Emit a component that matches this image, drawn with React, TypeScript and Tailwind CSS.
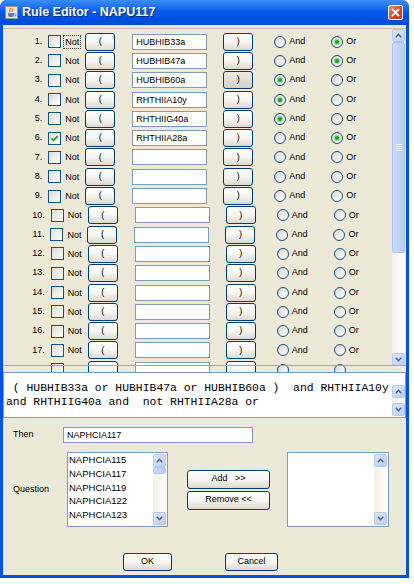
import clsx from "clsx"

type RowData = { value: string; op: "and" | "or" | null; not?: boolean }

const rows: RowData[] = [
  { value: "HUBHIB33a", op: "or" },
  { value: "HUBHIB47a", op: "or" },
  { value: "HUBHIB60a", op: "and" },
  { value: "RHTHIIA10y", op: "and" },
  { value: "RHTHIIG40a", op: "and" },
  { value: "RHTHIIA28a", op: "or", not: true },
  ...Array.from({ length: 12 }, () => ({ value: "", op: null } as RowData)),
]

const questions = ["NAPHCIA115", "NAPHCIA117", "NAPHCIA119", "NAPHCIA122", "NAPHCIA123", "NAPHCIA146"]

function Check({ checked }: { checked?: boolean }) {
  return (
    <div className="w-[13px] h-[13px] shrink-0 border border-[#1c5180] bg-linear-to-br from-[#dcdcd7] to-white flex items-center justify-center">
      {checked && (
        <svg width="9" height="9" viewBox="0 0 9 9">
          <path d="M1.5 4.3 L3.6 6.4 L7.6 2.2" fill="none" stroke="#21a121" strokeWidth="1.7" />
        </svg>
      )}
    </div>
  )
}

function Radio({ on }: { on?: boolean }) {
  return (
    <div className="w-[12px] h-[12px] shrink-0 rounded-full border border-[#1c5180] bg-linear-to-br from-[#d6d6d0] to-white flex items-center justify-center">
      {on && <div className="w-[4px] h-[4px] rounded-full bg-[#21a121] ring-1 ring-[#8ad88a]" />}
    </div>
  )
}

function XPButton({ children, className, hot }: { children?: React.ReactNode; className?: string; hot?: boolean }) {
  return (
    <div
      className={clsx(
        "flex items-center justify-center shrink-0 rounded-[3px] border border-[#003c74] whitespace-pre",
        hot ? "bg-linear-to-b from-[#eceae3] to-[#d4d0c6]" : "bg-linear-to-b from-white via-[#f6f5f1] to-[#dcd9cf]",
        className
      )}
    >
      {children}
    </div>
  )
}

function Arrow({ dir }: { dir: "up" | "down" }) {
  return (
    <div className="w-[13px] h-[13px] shrink-0 rounded-[2px] border border-[#b4c8f4] bg-linear-to-br from-[#dce6fd] to-[#bccdf9] flex items-center justify-center">
      <svg width="7" height="5" viewBox="0 0 7 5">
        <path
          d={dir === "up" ? "M0.8 4.2 L3.5 1.3 L6.2 4.2" : "M0.8 0.8 L3.5 3.7 L6.2 0.8"}
          fill="none"
          stroke="#4d6185"
          strokeWidth="1.5"
        />
      </svg>
    </div>
  )
}

function Thumb({ className, grip }: { className: string; grip?: boolean }) {
  return (
    <div className={clsx("shrink-0 rounded-[2px] border border-[#b0c5f4] bg-linear-to-r from-[#cbdafc] to-[#b9ccf9] flex flex-col items-center justify-center gap-[1px]", className)}>
      {grip && [0, 1, 2, 3].map(i => <div key={i} className="w-[6px] h-px bg-[#eef3fe]" />)}
    </div>
  )
}

function VScroll({ thumb, grip }: { thumb?: string; grip?: boolean }) {
  return (
    <div className="w-[13px] h-full flex flex-col bg-linear-to-r from-[#f3f1ec] to-[#fefefb]">
      <Arrow dir="up" />
      {thumb && <Thumb className={thumb} grip={grip} />}
      <div className="flex-1" />
      <Arrow dir="down" />
    </div>
  )
}

// the last row only peeks out under the viewport edge, so its labels stay hidden
function RuleRow({ idx, row, peek }: { idx: number; row: RowData; peek?: boolean }) {
  const txt = peek ? "invisible" : ""
  return (
    <div className="h-[19.3px] flex items-center justify-center">
      <span className={txt}>{idx + 1}.</span>
      <div className="ml-[6px]">
        <Check checked={row.not} />
      </div>
      <div className="ml-[2px] w-[19px] flex">
        <span className={clsx("px-[1px] leading-[12px] border", idx === 0 ? "border-dotted border-[#444]" : "border-transparent", txt)}>Not</span>
      </div>
      <XPButton className="ml-[3px] w-[30px] h-[18px]">{!peek && "("}</XPButton>
      <div className="ml-[17px] w-[75px] h-[16px] shrink-0 border border-[#7f9db9] bg-white px-[3px] leading-[14px]">{row.value}</div>
      <XPButton className="ml-[16px] w-[30px] h-[18px]" hot={idx === 2}>{!peek && ")"}</XPButton>
      <div className="ml-[21px] flex items-center w-[35px]">
        <Radio on={row.op === "and"} />
        <span className={clsx("ml-[3px]", txt)}>And</span>
      </div>
      <div className="ml-[22px] flex items-center w-[29px]">
        <Radio on={row.op === "or"} />
        <span className={clsx("ml-[3px]", txt)}>Or</span>
      </div>
    </div>
  )
}

export default function App() {
  return (
    <div className="w-[414px] h-[584px] bg-white font-['Liberation_Sans',Arial,sans-serif] text-[9px] text-black">
      <div className="w-[409px] h-[578px] flex flex-col bg-[#0052e0] rounded-t-[7px]">
        <div className="h-[25px] shrink-0 flex items-center pl-[5px] pr-[6px] rounded-t-[7px] bg-linear-to-b from-[#3c8cf8] via-[#0058ee] to-[#0049d6]">
          <svg width="13" height="13" viewBox="0 0 13 13">
            <rect x="0.5" y="0.5" width="12" height="12" fill="#ebe7da" stroke="#9d967e" />
            <path d="M3 7 h6 v2 a2 2 0 0 1 -2 2 h-2 a2 2 0 0 1 -2 -2z" fill="#5b7cc2" />
            <path d="M9 7.8 h1 a1.1 1.1 0 0 1 0 2.2 H8.6" fill="none" stroke="#5b7cc2" strokeWidth="0.8" />
            <path d="M5 6 C4 4.5 6 4 5 2 M7.3 6 C6.3 4.6 8.3 4 7.3 2.4" fill="none" stroke="#e0521c" strokeWidth="1" />
          </svg>
          <span className="ml-[4px] text-white font-bold text-[12.5px] [text-shadow:1px_1px_0_#0a2a7a]">Rule Editor - NAPU117</span>
          <div className="ml-auto w-[15px] h-[15px] rounded-[2px] border border-white bg-linear-to-br from-[#e98a6d] via-[#d64c2c] to-[#bf3a1b] flex items-center justify-center">
            <svg width="9" height="9" viewBox="0 0 9 9">
              <path d="M1.5 1.5 L7.5 7.5 M7.5 1.5 L1.5 7.5" stroke="white" strokeWidth="1.8" strokeLinecap="round" />
            </svg>
          </div>
        </div>

        <div className="flex-1 mx-[3px] mb-[3px] bg-[#ece9d8] flex flex-col">
          <div className="relative mt-[3px] h-[344px] shrink-0 flex border-t border-[#c5c2b2]">
            <div className="flex-1 overflow-hidden pt-[3px]">
              {rows.map((r, i) => (
                <RuleRow key={i} idx={i} row={r} peek={i === rows.length - 1} />
              ))}
            </div>
            <div className="w-[13px] mr-[1px] h-[337px]">
              <VScroll thumb="h-[211px]" grip />
            </div>
            <div className="absolute left-0 right-0 bottom-[6px] h-px bg-[#aca899]" />
          </div>

          <div className="h-[46px] shrink-0 flex border border-[#7f9db9] bg-white">
            <div className="flex-1 pl-[2px] pt-[8px] font-['Liberation_Mono',monospace] text-[11.4px] leading-[14px] whitespace-pre">
              {" ( HUBHIB33a or HUBHIB47a or HUBHIB60a )  and RHTHIIA10y\nand RHTHIIG40a and  not RHTHIIA28a or"}
            </div>
            <div className="pt-[12px] pb-[1px]">
              <VScroll />
            </div>
          </div>

          <div className="mt-[9px] flex items-center pl-[10px]">
            <span className="w-[50px]">Then</span>
            <div className="w-[190px] h-[16px] border border-[#7f9db9] bg-white px-[3px] leading-[14px]">NAPHCIA117</div>
          </div>

          <div className="mt-[9px] flex items-center pl-[10px]">
            <span className="w-[54px]">Question</span>
            <div className="w-[101px] h-[75px] flex border border-[#7f9db9] bg-white">
              <div className="flex-1 overflow-hidden pl-[1px] leading-[13.8px] text-[9.5px]">
                {questions.map(q => (
                  <div key={q}>{q}</div>
                ))}
              </div>
              <div className="py-[1px] pr-[1px]">
                <VScroll thumb="h-[7px]" />
              </div>
            </div>
            <div className="ml-[19px] flex flex-col gap-[2px]">
              <XPButton className="w-[83px] h-[19px]">Add   &gt;&gt;</XPButton>
              <XPButton className="w-[83px] h-[19px]">Remove &lt;&lt;</XPButton>
            </div>
            <div className="ml-[17px] w-[102px] h-[75px] flex justify-end border border-[#7f9db9] bg-white">
              <div className="py-[1px] pr-[1px]">
                <VScroll />
              </div>
            </div>
          </div>

          <div className="mt-[26px] flex justify-center gap-[53px] pr-[8px]">
            <XPButton className="w-[49px] h-[18px]">OK</XPButton>
            <XPButton className="w-[53px] h-[18px]">Cancel</XPButton>
          </div>
        </div>
      </div>
    </div>
  )
}
